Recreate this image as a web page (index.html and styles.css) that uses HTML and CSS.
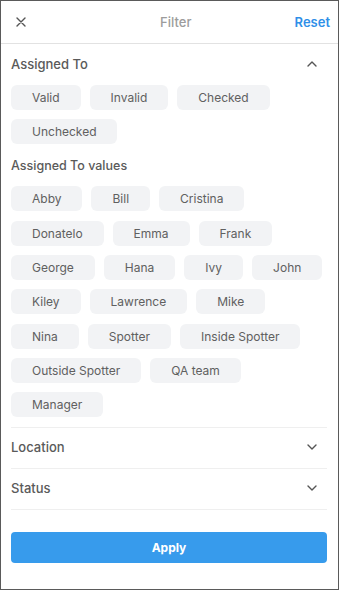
FILE: index.html
```html
<!DOCTYPE html>
<html lang="en">

<head>
    <meta charset="UTF-8">
    <meta name="viewport" content="width=device-width, initial-scale=1.0">
    <title>Filter</title>
    <link rel="stylesheet" href="styles.css">
</head>

<body>
    <div class="filter">
        <div class="header">
            <button class="close">
                <svg width="10" height="10" viewBox="0 0 10 10"><path d="M1 1L9 9M9 1L1 9" stroke="#555" stroke-width="1.4" fill="none" stroke-linecap="round"/></svg>
            </button>
            <div class="title">Filter</div>
            <button class="reset">Reset</button>
        </div>

        <div class="content">
            <div class="section open">
                <div class="section-head">
                    <span>Assigned To</span>
                    <svg width="10" height="6" viewBox="0 0 10 6"><path d="M1 5L5 1L9 5" stroke="#555" stroke-width="1.4" fill="none" stroke-linecap="round" stroke-linejoin="round"/></svg>
                </div>
                <div class="chips">
                    <span class="chip">Valid</span>
                    <span class="chip">Invalid</span>
                    <span class="chip">Checked</span>
                    <span class="chip">Unchecked</span>
                </div>
                <div class="label">Assigned To values</div>
                <div class="chips">
                    <span class="chip">Abby</span>
                    <span class="chip">Bill</span>
                    <span class="chip">Cristina</span>
                    <span class="chip">Donatelo</span>
                    <span class="chip">Emma</span>
                    <span class="chip">Frank</span>
                    <span class="chip">George</span>
                    <span class="chip">Hana</span>
                    <span class="chip">Ivy</span>
                    <span class="chip">John</span>
                    <span class="chip">Kiley</span>
                    <span class="chip">Lawrence</span>
                    <span class="chip">Mike</span>
                    <span class="chip">Nina</span>
                    <span class="chip">Spotter</span>
                    <span class="chip">Inside Spotter</span>
                    <span class="chip">Outside Spotter</span>
                    <span class="chip">QA team</span>
                    <span class="chip">Manager</span>
                </div>
            </div>

            <div class="section">
                <div class="section-head">
                    <span>Location</span>
                    <svg width="10" height="6" viewBox="0 0 10 6"><path d="M1 1L5 5L9 1" stroke="#555" stroke-width="1.4" fill="none" stroke-linecap="round" stroke-linejoin="round"/></svg>
                </div>
            </div>

            <div class="section">
                <div class="section-head">
                    <span>Status</span>
                    <svg width="10" height="6" viewBox="0 0 10 6"><path d="M1 1L5 5L9 1" stroke="#555" stroke-width="1.4" fill="none" stroke-linecap="round" stroke-linejoin="round"/></svg>
                </div>
            </div>

            <button class="apply">Apply</button>
        </div>
    </div>
</body>

</html>
```

FILE: styles.css
```css
* {
    box-sizing: border-box;
}

body {
    margin: 0;
    font-family: Inter, "Noto Sans", sans-serif;
    background-color: #fff;
}

.filter {
    width: 339px;
    height: 590px;
    border: 1px solid #5a5a5a;
    background-color: #fff;
}

.header {
    height: 43px;
    display: flex;
    align-items: center;
    justify-content: space-between;
    padding: 0 8px 0 10px;
    border-bottom: 1px solid #e2e2e2;
}

button {
    border: none;
    background: none;
    font-family: inherit;
    cursor: pointer;
    padding: 0;
}

.close {
    width: 20px;
    height: 20px;
    display: flex;
    align-items: center;
    justify-content: center;
}

.title {
    font-size: 13px;
    color: #9c9c9c;
    font-weight: 500;
    margin-left: 26px;
}

.reset {
    font-size: 13px;
    font-weight: 600;
    color: #2f8fe8;
}

.content {
    padding: 0 11px 0 10px;
}

.section {
    border-bottom: 1px solid #efefef;
}

.section.open {
    padding-bottom: 10px;
}

.section-head {
    height: 40px;
    display: flex;
    align-items: center;
    justify-content: space-between;
    padding: 0 10px 3px 0;
    font-size: 13px;
    font-weight: 500;
    color: #5a5a5a;
}

.section.open .section-head {
    height: 41px;
    padding-bottom: 2px;
}

.label {
    font-size: 12.5px;
    font-weight: 500;
    color: #5a5a5a;
    line-height: 20px;
    margin: 12px 0 10px;
}

.chips {
    display: flex;
    flex-wrap: wrap;
    gap: 9.33px 9px;
}

.chip {
    height: 25px;
    line-height: 25px;
    padding: 0 21px;
    border-radius: 6px;
    background-color: #f2f3f5;
    color: #606060;
    font-size: 12px;
}

.apply {
    display: block;
    width: 100%;
    height: 31px;
    margin-top: 22px;
    border-radius: 4px;
    background-color: #379bec;
    color: #fff;
    font-size: 12px;
    font-weight: 700;
}
```
